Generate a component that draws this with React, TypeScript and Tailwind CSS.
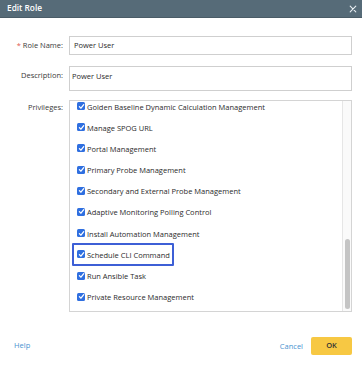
import React from "react";

const items = [
  "Golden Baseline Dynamic Calculation Management",
  "Manage SPOG URL",
  "Portal Management",
  "Primary Probe Management",
  "Secondary and External Probe Management",
  "Adaptive Monitoring Polling Control",
  "Install Automation Management",
  "Schedule CLI Command",
  "Run Ansible Task",
  "Private Resource Management",
];

function Check() {
  return (
    <span className="w-[8px] h-[8px] rounded-[1.5px] bg-[#2f6fe0] flex items-center justify-center shrink-0">
      <svg width="7" height="7" viewBox="0 0 10 10">
        <path d="M2 5.2 L4.2 7.4 L8.2 2.4" stroke="white" strokeWidth="1.8" fill="none" strokeLinecap="round" strokeLinejoin="round" />
      </svg>
    </span>
  );
}

export default function App() {
  return (
    <div
      className="w-[362px] h-[369px] bg-white flex flex-col text-[#2b2b2b] text-[7.5px]"
      style={{ fontFamily: '"Open Sans", "Liberation Sans", sans-serif' }}
    >
      <div className="h-[18px] bg-[#566b78] border-b border-[#4a5c67] flex items-center justify-between pl-[7px] pr-[5px] shrink-0">
        <span className="text-white text-[8.3px] font-semibold">Edit Role</span>
        <svg width="8" height="8" viewBox="0 0 10 10">
          <path d="M1.5 1.5 L8.5 8.5 M8.5 1.5 L1.5 8.5" stroke="#e8eef2" strokeWidth="1.4" strokeLinecap="round" />
        </svg>
      </div>

      <div className="flex flex-col pt-[18px] pr-[10px]">
        <div className="flex items-center h-[19px]">
          <div className="w-[63px] text-right text-[#3a3a3a]">
            <span className="text-[#e05a4f]">* </span>Role Name:
          </div>
          <div className="ml-[6px] flex-1 h-[19px] border border-[#cfcfcf] flex items-center pl-[4px]">Power User</div>
        </div>

        <div className="flex items-start mt-[11px]">
          <div className="w-[63px] text-right text-[#3a3a3a] pt-[4px]">Description:</div>
          <div className="ml-[6px] flex-1 h-[25px] border border-[#cfcfcf] pl-[2px] pt-[4px] leading-[10px]">Power User</div>
        </div>

        <div className="flex items-start mt-[9px]">
          <div className="w-[63px] text-right text-[#3a3a3a] pt-[2px]">Privileges:</div>
          <div className="ml-[6px] flex-1 h-[212px] border border-[#d4d4d4] flex overflow-hidden">
            <div className="flex-1 flex flex-col pt-[1px] pl-[7px]">
              {items.map((t) => (
                <div key={t} className="relative h-[21.2px] flex items-start shrink-0">
                  <Check />
                  <span className="ml-[2px] leading-[9px] mt-[0.5px] whitespace-nowrap">{t}</span>
                  {t === "Schedule CLI Command" && (
                    <div className="absolute left-[-5px] top-[-7px] w-[102px] h-[23px] border-2 border-[#3d5fd6] rounded-[1px]" />
                  )}
                </div>
              ))}
            </div>
            <div className="w-[9px] border-l border-[#e6e6e6] bg-[#fafafa] flex flex-col items-center justify-end pb-[2px]">
              <div className="w-[5px] h-[70px] rounded-[3px] bg-[#c4c4c4]" />
            </div>
          </div>
        </div>
      </div>

      <div className="flex items-center justify-between pl-[14px] pr-[10px] mt-[25px]">
        <span className="text-[#4a94d0]">Help</span>
        <div className="flex items-center">
          <span className="text-[#4a94d0] mr-[8px] mt-[1px]">Cancel</span>
          <div className="w-[41px] h-[18px] rounded-[2px] bg-[#f7c843] flex items-center justify-center font-semibold text-[#333]">OK</div>
        </div>
      </div>
    </div>
  );
}
